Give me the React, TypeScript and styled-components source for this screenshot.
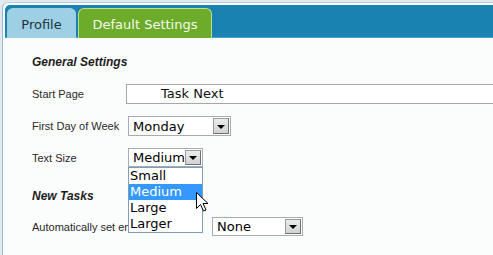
import React from 'react';
import styled, { createGlobalStyle } from 'styled-components';

const GlobalStyle = createGlobalStyle`
  html, body {
    margin: 0;
    padding: 0;
    background: #e3e8ec;
    overflow: hidden;
  }
  * { box-sizing: border-box; }
`;

const Frame = styled.div`
  margin: 2px 0 0 2px;
  height: 253px;
  border-top: 1px solid #bcd0df;
  border-left: 1px solid #8fbbdc;
  border-radius: 6px 0 0 0;
  background: #fbfcfc;
  overflow: hidden;
`;

const Header = styled.div`
  margin: 2px 0 0 2px;
  height: 33px;
  padding-left: 2px;
  display: flex;
  align-items: flex-end;
  gap: 2px;
  background: #1a82b0;
  border-radius: 5px 0 0 0;
  border-bottom: 1px solid #4a9fd6;
`;

const Tab = styled.div<{ $active?: boolean; $width: number }>`
  width: ${p => p.$width}px;
  height: 30px;
  margin-bottom: -1px;
  padding-top: 1px;
  display: flex;
  align-items: center;
  justify-content: center;
  font-family: 'DejaVu Sans', Verdana, sans-serif;
  font-size: 13px;
  border-radius: 6px 6px 0 0;
  background: ${p => (p.$active ? '#6dab2a' : '#9dd0e5')};
  color: ${p => (p.$active ? '#f4faec' : '#25303a')};
  border: 1px solid ${p => (p.$active ? '#b9de8c' : '#9dd0e5')};
  border-bottom: none;
`;

const Content = styled.div`
  padding: 17px 0 0 29px;
`;

const Heading = styled.div<{ $top?: number }>`
  margin-top: ${p => p.$top ?? 0}px;
  font-family: 'Liberation Sans', Arial, sans-serif;
  font-size: 12px;
  line-height: 14px;
  font-weight: bold;
  font-style: italic;
  color: #1e1e1e;
`;

const Row = styled.div<{ $top: number; $h?: number }>`
  margin-top: ${p => p.$top}px;
  height: ${p => p.$h ?? 20}px;
  display: flex;
  align-items: center;
`;

const Label = styled.div<{ $width?: number }>`
  width: ${p => p.$width ?? 94}px;
  flex-shrink: 0;
  white-space: nowrap;
  font-family: 'Liberation Sans', Arial, sans-serif;
  font-size: 11px;
  color: #2a2a2a;
`;

const TextField = styled.div`
  width: 420px;
  height: 20px;
  flex-shrink: 0;
  border: 1px solid #a7a7a7;
  background: #fff;
  padding-left: 34px;
  font-family: 'DejaVu Sans', Verdana, sans-serif;
  font-size: 13px;
  line-height: 18px;
  color: #111;
`;

const SelectBox = styled.div<{ $width: number; $h?: number; $left?: number }>`
  position: relative;
  margin-left: ${p => p.$left ?? 2}px;
  width: ${p => p.$width}px;
  height: ${p => p.$h ?? 20}px;
  flex-shrink: 0;
  border: 1px solid #a5acb2;
  background: #fff;
  display: flex;
  align-items: center;
  font-family: 'DejaVu Sans', Verdana, sans-serif;
  font-size: 13px;
  color: #000;
`;

const SelectText = styled.div`
  flex: 1;
  padding-left: 4px;
  white-space: nowrap;
`;

const ArrowButton = styled.div`
  width: 16px;
  height: calc(100% - 2px);
  margin-right: 1px;
  flex-shrink: 0;
  border: 1px solid #6f6f6f;
  border-top-color: #9a9a9a;
  border-left-color: #9a9a9a;
  background: linear-gradient(#ececec, #d2d2d2);
  display: flex;
  align-items: center;
  justify-content: center;
  &::after {
    content: '';
    border-left: 4px solid transparent;
    border-right: 4px solid transparent;
    border-top: 4px solid #000;
    margin-top: 1px;
  }
`;

const DropList = styled.div`
  position: absolute;
  left: -1px;
  top: 18px;
  width: calc(100% + 2px);
  border: 1px solid #7f9db9;
  background: #fff;
  z-index: 2;
`;

const Option = styled.div<{ $selected?: boolean }>`
  height: 16px;
  line-height: 16px;
  padding-left: 1px;
  font-family: 'DejaVu Sans', Verdana, sans-serif;
  font-size: 13px;
  background: ${p => (p.$selected ? '#3399ff' : 'transparent')};
  color: ${p => (p.$selected ? '#fff' : '#000')};
`;

const Cursor = styled.svg`
  position: absolute;
  left: 67px;
  top: 43px;
  z-index: 3;
`;

const Select = ({ value, width, h, left, children }: { value: string; width: number; h?: number; left?: number; children?: React.ReactNode }) => (
  <SelectBox $width={width} $h={h} $left={left}>
    <SelectText>{value}</SelectText>
    <ArrowButton />
    {children}
  </SelectBox>
);

export default function App() {
  const sizes = ['Small', 'Medium', 'Large', 'Larger'];
  return (
    <>
      <GlobalStyle />
      <Frame>
        <Header>
          <Tab $width={69}>Profile</Tab>
          <Tab $width={134} $active>Default Settings</Tab>
        </Header>
        <Content>
          <Heading>General Settings</Heading>
          <Row $top={15}>
            <Label>Start Page</Label>
            <TextField>Task Next</TextField>
          </Row>
          <Row $top={12}>
            <Label>First Day of Week</Label>
            <Select value="Monday" width={103} />
          </Row>
          <Row $top={12} $h={19}>
            <Label>Text Size</Label>
            <Select value="Medium" width={75} h={19}>
              <DropList>
                {sizes.map(s => (
                  <Option key={s} $selected={s === 'Medium'}>{s}</Option>
                ))}
              </DropList>
              <Cursor width="13" height="20" viewBox="0 0 13 20">
                <path d="M0.5 0.5 L0.5 16.5 L4.5 12.5 L7.5 19 L10 18 L7 11.5 L12 11.5 Z" fill="#fff" stroke="#000" strokeWidth="1" />
              </Cursor>
            </Select>
          </Row>
          <Heading $top={22}>New Tasks</Heading>
          <Row $top={14} $h={19}>
            {/* only this much of the label shows beside the open list */}
            <Label $width={96}>Automatically set en</Label>
            <Select value="None" width={91} h={19} left={84} />
          </Row>
        </Content>
      </Frame>
    </>
  );
}
